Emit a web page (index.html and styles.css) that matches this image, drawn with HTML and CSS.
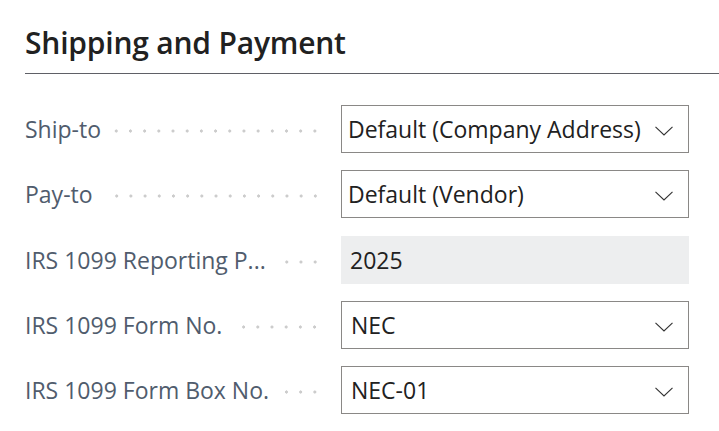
FILE: index.html
```html
<!DOCTYPE html>
<html>
<head>
<meta charset="utf-8">
<link rel="stylesheet" href="styles.css">
</head>
<body>
<div class="page">
  <h2 class="title">Shipping and Payment</h2>
  <div class="rule"></div>
  <div class="form">
    <div class="row">
      <div class="label"><span class="text">Ship-to</span><span class="dots"></span></div>
      <div class="field select"><span class="value">Default (Company Address)</span>
        <svg class="chev" width="18" height="10" viewBox="0 0 18 10"><path d="M0.5 0.8 L9 9 L17.5 0.8" fill="none" stroke="#333" stroke-width="1.1"/></svg></div>
    </div>
    <div class="row">
      <div class="label"><span class="text">Pay-to</span><span class="dots"></span></div>
      <div class="field select"><span class="value">Default (Vendor)</span>
        <svg class="chev" width="18" height="10" viewBox="0 0 18 10"><path d="M0.5 0.8 L9 9 L17.5 0.8" fill="none" stroke="#333" stroke-width="1.1"/></svg></div>
    </div>
    <div class="row">
      <div class="label"><span class="text" title="IRS 1099 Reporting Period">IRS 1099 Reporting P...</span><span class="dots"></span></div>
      <div class="field readonly"><span class="value pad">2025</span></div>
    </div>
    <div class="row">
      <div class="label"><span class="text">IRS 1099 Form No.</span><span class="dots"></span></div>
      <div class="field select"><span class="value pad">NEC</span>
        <svg class="chev" width="18" height="10" viewBox="0 0 18 10"><path d="M0.5 0.8 L9 9 L17.5 0.8" fill="none" stroke="#333" stroke-width="1.1"/></svg></div>
    </div>
    <div class="row">
      <div class="label"><span class="text">IRS 1099 Form Box No.</span><span class="dots"></span></div>
      <div class="field select"><span class="value pad">NEC-01</span>
        <svg class="chev" width="18" height="10" viewBox="0 0 18 10"><path d="M0.5 0.8 L9 9 L17.5 0.8" fill="none" stroke="#333" stroke-width="1.1"/></svg></div>
    </div>
  </div>
</div>
</body>
</html>
```

FILE: styles.css
```css
html, body {
  margin: 0;
  padding: 0;
  background: #ffffff;
}
.page {
  padding: 23px 0 0 25px;
  font-family: "Open Sans", "Noto Sans", sans-serif;
}
.title {
  margin: 0;
  font-size: 30px;
  font-weight: 600;
  color: #212121;
  line-height: 40px;
  letter-spacing: -0.2px;
}
.rule {
  margin-top: 10px;
  height: 1px;
  background: #5f6066;
}
.form {
  margin-top: 31px;
  display: flex;
  flex-direction: column;
  gap: 17.25px;
}
.row {
  display: flex;
  align-items: center;
  height: 48px;
}
.label {
  width: 297px;
  margin-right: 19px;
  display: flex;
  align-items: center;
  font-size: 23px;
  color: #505c6d;
}
.text {
  white-space: nowrap;
}
.dots {
  flex: 1;
  height: 6px;
  margin-left: 12px;
  margin-top: 4px;
  background-image: radial-gradient(circle, #cccccc 1.4px, transparent 1.8px);
  background-size: 14.2px 6px;
  background-repeat: repeat-x;
  background-position: right center;
}
.field {
  box-sizing: border-box;
  width: 348px;
  height: 48px;
  display: flex;
  align-items: center;
  font-size: 23px;
  color: #212121;
}
.select {
  border: 1px solid #8a8886;
  padding: 0 15px 0 6px;
}
.readonly {
  background: #edeeef;
  padding: 0 15px 0 6px;
}
.value {
  flex: 1;
  white-space: nowrap;
}
.value.pad {
  padding-left: 3px;
}
.chev {
  display: block;
  margin-top: 4px;
}
```
